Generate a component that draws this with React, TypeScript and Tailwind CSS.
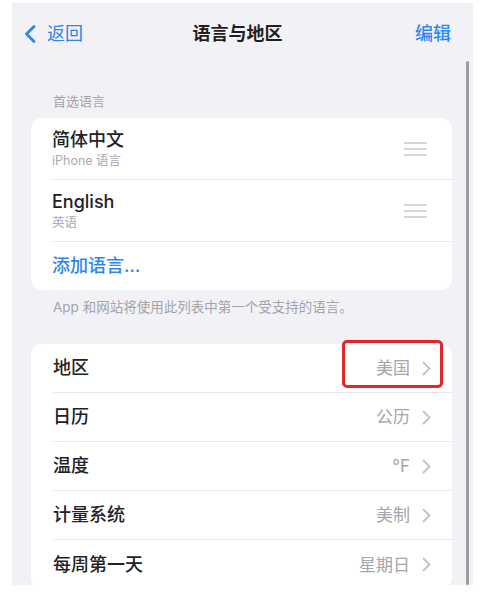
const font = "font-['Inter','Noto_Sans_CJK_SC',sans-serif]";

function Chevron() {
  return (
    <svg width="9" height="15" viewBox="0 0 9 15" fill="none">
      <path d="M1.5 1.5l6 6-6 6" stroke="#c3c3c7" strokeWidth="1.8" strokeLinecap="round" strokeLinejoin="round" />
    </svg>
  );
}

function Handle() {
  return (
    <div className="flex w-[23px] flex-col gap-[4px]">
      <div className="h-[2px] bg-[#d6d6da]" />
      <div className="h-[2px] bg-[#d6d6da]" />
      <div className="h-[2px] bg-[#d6d6da]" />
    </div>
  );
}

const languages = [
  { name: "简体中文", sub: "iPhone 语言" },
  { name: "English", sub: "英语" },
];

const regionRows = [
  { label: "地区", value: "美国" },
  { label: "日历", value: "公历" },
  { label: "温度", value: "°F" },
  { label: "计量系统", value: "美制" },
  { label: "每周第一天", value: "星期日" },
];

export default function App() {
  return (
    <div className={`h-[594px] w-[482px] bg-white pb-[9px] pl-[12px] pr-[9px] pt-[3px] ${font}`}>
      <div className="relative h-full overflow-hidden bg-[#f2f2f6]">
        {/* nav bar */}
        <div className="flex h-[62px] items-center pl-[12px] pr-[22px]">
          <div className="flex flex-1 items-center gap-[11px]">
            <svg width="12" height="18" viewBox="0 0 12 18" fill="none">
              <path d="M10 1.5L2.5 9l7.5 7.5" stroke="#2a86f0" strokeWidth="2.8" strokeLinecap="round" strokeLinejoin="round" />
            </svg>
            <span className="text-[18px] leading-[22px] text-[#2a86f0]">返回</span>
          </div>
          <span className="text-[18px] font-semibold leading-[22px] text-[#1f1f21]">语言与地区</span>
          <div className="flex-1 text-right">
            <span className="text-[18px] font-medium leading-[22px] text-[#2a86f0]">编辑</span>
          </div>
        </div>

        <div className="pl-[19px] pr-[21px]">
          <p className="mb-[9px] mt-[28px] pl-[22px] text-[13px] leading-[16px] text-[#a3a3a8]">首选语言</p>

          <div className="rounded-[11px] bg-white">
            {languages.map((l) => (
              <div key={l.name} className="pl-[21px]">
                <div className="flex h-[62px] items-center justify-between border-b border-[#e8e8ec] pr-[25px]">
                  <div className="flex flex-col">
                    <span className="text-[18px] font-medium leading-[22px] text-[#222224]">{l.name}</span>
                    <span className="mt-[2px] text-[12.5px] leading-[16px] text-[#a9a9ae]">{l.sub}</span>
                  </div>
                  <Handle />
                </div>
              </div>
            ))}
            <div className="flex h-[48px] items-center pl-[21px]">
              <span className="text-[18px] font-medium leading-[22px] text-[#2a86f0]">添加语言…</span>
            </div>
          </div>

          <p className="mt-[9px] pl-[22px] text-[13.5px] leading-[16px] text-[#a3a3a8]">
            App 和网站将使用此列表中第一个受支持的语言。
          </p>

          <div className="relative mt-[29px] rounded-[11px] bg-white">
            {regionRows.map((r, i) => (
              <div key={r.label} className="pl-[22px]">
                <div
                  className={`flex h-[49px] items-center justify-between pr-[21px] ${
                    i < regionRows.length - 1 ? "border-b border-[#e8e8ec]" : ""
                  }`}
                >
                  <span className="text-[18px] font-medium leading-[22px] text-[#222224]">{r.label}</span>
                  <div className="flex items-center gap-[12px]">
                    <span className="text-[17px] leading-[22px] text-[#a5a5aa]">{r.value}</span>
                    <Chevron />
                  </div>
                </div>
              </div>
            ))}
            <div className="absolute left-[311px] top-[-4px] h-[48px] w-[101px] rounded-[5px] border-[3px] border-[#e3262a]" />
          </div>
        </div>

        {/* scroll indicator */}
        <div className="absolute bottom-0 right-[4px] top-[58px] w-[3px] rounded-full bg-[#9c9ca0]" />
      </div>
    </div>
  );
}
